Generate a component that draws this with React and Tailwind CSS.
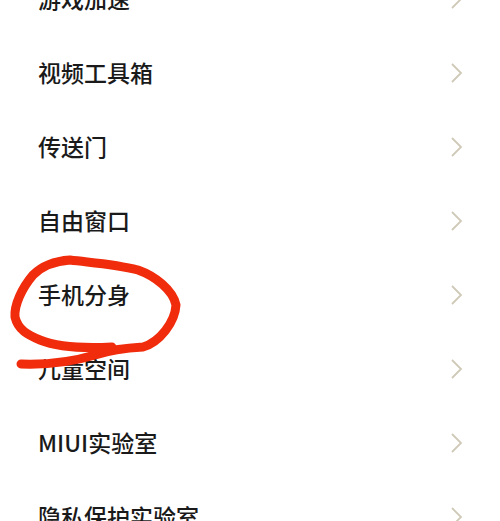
const rows = ["游戏加速", "视频工具箱", "传送门", "自由窗口", "手机分身", "儿童空间", "MIUI实验室", "隐私保护实验室"];

function Chevron() {
  return (
    <svg width="14" height="22" viewBox="0 0 14 22" fill="none" stroke="#cfc9b8" strokeWidth="1.8">
      <path d="M2 2 L11 11 L2 20" />
    </svg>
  );
}

export default function App() {
  return (
    <div className="relative w-[500px] h-[521px] overflow-hidden bg-white font-['Noto_Sans_CJK_SC','Liberation_Sans',sans-serif]">
      <div className="-mt-[38px] flex flex-col">
        {rows.map(r => (
          <div key={r} className="h-[74px] flex items-center justify-between pl-[38px] pr-[36px] text-[23px] font-medium text-[#1a1a1a]">
            <span className="pb-[2px]">{r}</span>
            <Chevron />
          </div>
        ))}
      </div>
      <svg className="absolute left-0 top-0" width="500" height="521" fill="none">
        <path d="M21 364 C50 365 75 361 95 355 C110 350 125 348 143 347 C160 342 175 322 176 305 C173 290 155 276 138 270 C115 264 95 263 70 260 C55 261 42 266 33 275 C22 288 14 305 15 317 C18 330 28 335 40 340 C55 346 75 349 112 347" stroke="#f02c0c" strokeWidth="9" strokeLinecap="round" strokeLinejoin="round" />
      </svg>
    </div>
  );
}
